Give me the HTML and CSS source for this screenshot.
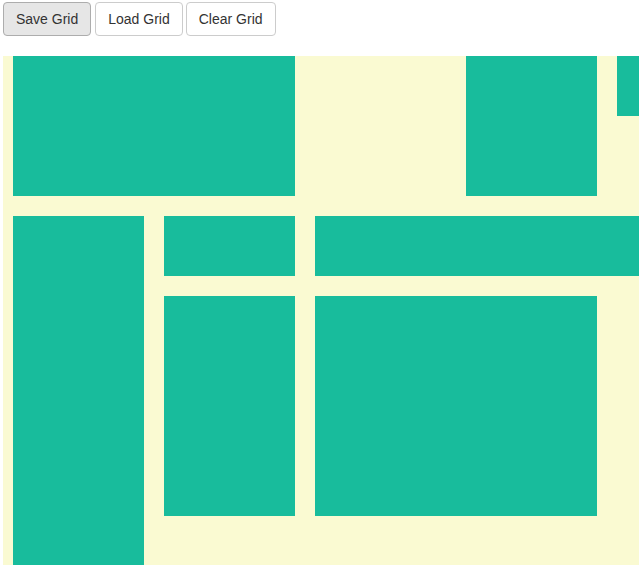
FILE: index.html
```html
<!DOCTYPE html>
<html>
<head>
<meta charset="utf-8">
<link rel="stylesheet" href="styles.css">
</head>
<body>
<div class="page">
  <div class="toolbar">
    <button class="btn btn-active">Save Grid</button>
    <button class="btn">Load Grid</button>
    <button class="btn btn-last">Clear Grid</button>
  </div>
  <div class="grid">
    <div class="item a"></div>
    <div class="item b"></div>
    <div class="item c"></div>
    <div class="item d"></div>
    <div class="item e"></div>
    <div class="item f"></div>
    <div class="item g"></div>
    <div class="item h"></div>
  </div>
</div>
</body>
</html>
```
FILE: styles.css
```css
html, body {
  margin: 0;
  padding: 0;
  overflow: hidden;
  background: #fff;
}
.page {
  padding: 2px 0 0 3px;
  font-family: "Liberation Sans", Arial, sans-serif;
}
.toolbar {
  display: flex;
  gap: 4px;
  height: 34px;
}
.btn {
  box-sizing: border-box;
  height: 34px;
  padding: 6px 12px;
  font-family: "Liberation Sans", Arial, sans-serif;
  font-size: 14px;
  line-height: 20px;
  color: #333;
  background: #fff;
  border: 1px solid #ccc;
  border-radius: 4px;
}
.btn-last {
  margin-left: -1px;
}
.btn-active {
  background: #e6e6e6;
  border-color: #adadad;
}
.grid {
  margin-top: 20px;
  background: #fafad2;
  padding-left: 10px;
  display: grid;
  grid-template-columns: repeat(6, 131px);
  grid-auto-rows: 60px;
  column-gap: 20px;
  row-gap: 20px;
  height: 560px;
}
.item {
  background: #18bc9c;
}
.a { grid-column: 1 / span 2; grid-row: 1 / span 2; }
.b { grid-column: 4; grid-row: 1 / span 2; }
.c { grid-column: 5; grid-row: 1; }
.d { grid-column: 1; grid-row: 3 / span 5; }
.e { grid-column: 2; grid-row: 3; }
.f { grid-column: 3 / span 3; grid-row: 3; }
.g { grid-column: 2; grid-row: 4 / span 3; }
.h { grid-column: 3 / span 2; grid-row: 4 / span 3; }
```
